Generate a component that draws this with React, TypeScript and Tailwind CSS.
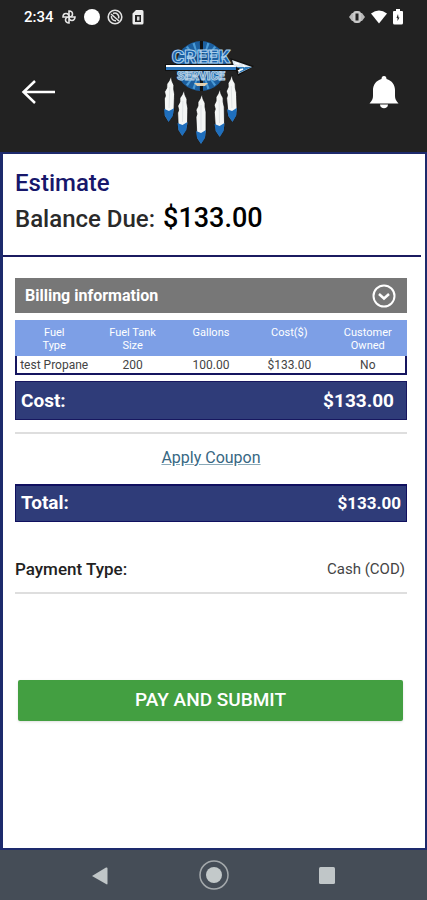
import React from "react";

const feathers = [
  { x: 20, y: 47, h: 41, tilt: 2 },
  { x: 33, y: 61, h: 41, tilt: 1 },
  { x: 51, y: 65, h: 45, tilt: 0 },
  { x: 69, y: 60, h: 43, tilt: -1 },
  { x: 81, y: 46, h: 42, tilt: -2 },
];

const rays = Array.from({ length: 20 }, (_, i) => (i * 360) / 20);

function Logo() {
  return (
    <svg
      className="h-[120px] w-[126px]"
      viewBox="0 0 126 120"
      role="img"
      aria-label="Creek Service"
    >
      <circle cx="51" cy="32" r="25" fill="#1c5f9f" />
      {rays.map((angle) => (
        <path
          key={angle}
          d="M51 32 L49.8 8 L52.2 8 Z"
          fill={angle % 90 === 0 ? "#111111" : "#4b9bd6"}
          transform={`rotate(${angle} 51 32)`}
        />
      ))}
      <path d="M50 7 H53 V20 H50 Z M50 46 H53 V57 H50 Z" fill="#111111" />
      <circle cx="51" cy="32" r="13" fill="#174d83" />
      <path d="M44 49 H58 L55 52 H47 Z" fill="#e3cfae" />
      <g
        fontFamily="Roboto, sans-serif"
        fontWeight="900"
        textAnchor="middle"
        strokeLinejoin="round"
      >
        <text x="51" y="29" fontSize="19" fill="#1762ac" stroke="#a9cdea" strokeWidth="1">
          CREEK
        </text>
        <text x="51" y="46" fontSize="12" fill="#3d7fb9" stroke="#b5cfe4" strokeWidth="1">
          SERVICE
        </text>
      </g>
      <path d="M15 30 L84 30 L80 24 L104 32 L88 42 L86 37 L15 37 Z" fill="#111111" />
      <path d="M16 32 H86" stroke="#ffffff" strokeWidth="2" />
      <path d="M16 34.500 H86" stroke="#2d77bd" strokeWidth="3" />
      <path d="M82 26 L102 33 L88 40 L90 34 L84 32 Z" fill="#dfe9f1" />
      <path d="M86 33 L102 33 L89 39 L91 35 Z" fill="#2f7cbc" />
      <path d="M85 29 l4 1 M88 37 l5 -2 M93 31 l2 2" stroke="#ffffff" strokeWidth="1.500" />
      {feathers.map((f) => (
        <g key={f.x} transform={`translate(${f.x} ${f.y}) rotate(${f.tilt})`}>
          <path
            d={`M1 -5 L2 0 L4 4 L4 8 L5 13 L5 17 L5 ${f.h - 13} L4 ${f.h - 7} L0 ${f.h} L-4 ${f.h - 6} L-5 18 L-4 15 L-5 11 L-3 7 L-3 3 L-1 0 Z`}
            fill="#f4f6f5"
            stroke="#0b0b0b"
            strokeWidth="0.700"
          />
          <path
            d={`M-5 ${f.h - 13} L0 ${f.h - 11} L5 ${f.h - 14} L4 ${f.h - 6} L0 ${f.h} L-4 ${f.h - 6} Z`}
            fill="#1f6fbd"
          />
          <path d={`M0 6 V${f.h - 14}`} stroke="#d0d5d8" strokeWidth="0.600" />
        </g>
      ))}
    </svg>
  );
}

function StatusBar() {
  return (
    <div className="flex h-[34px] items-center justify-between px-6 text-white">
      <div className="flex items-center gap-[7px]">
        <span className="text-[15px] leading-5 font-medium">2:34</span>
        <svg className="size-4" viewBox="0 0 16 16" fill="#222222" stroke="#e5e5e5" strokeWidth="1.600">
          <path d="M8 8 V2 a3.500 3 0 0 1 0 6 Z" />
          <path d="M8 8 H14 a3 3.500 0 0 1 -6 0 Z" />
          <path d="M8 8 V14 a3.500 3 0 0 1 0 -6 Z" />
          <path d="M8 8 H2 a3 3.500 0 0 1 6 0 Z" />
        </svg>
        <svg className="size-4" viewBox="0 0 16 16">
          <circle cx="8" cy="8" r="8" fill="#ffffff" />
        </svg>
        <svg className="size-4" viewBox="0 0 16 16" fill="none" stroke="#e2e2e2">
          <circle cx="8" cy="8" r="6.800" strokeWidth="1.600" />
          <path d="M4 5 L12 12" strokeWidth="1.600" />
          <path d="M6 4.500 a4 4 0 0 1 5.500 5 M4.500 7 a4 4 0 0 0 4.500 4.700" strokeWidth="1.500" />
        </svg>
        <svg className="size-4" viewBox="0 0 16 16">
          <path
            d="M6 1 H12 a1.500 1.500 0 0 1 1.500 1.500 V14 a1.500 1.500 0 0 1 -1.500 1.500 H4 A1.500 1.500 0 0 1 2.500 14 V4.500 Z"
            fill="#ececec"
          />
          <path d="M5 6 H11 V13 H5 Z" fill="#222222" />
          <path d="M7 7.500 H9.500 V11.500 H7 Z" fill="#d5d5d5" />
        </svg>
      </div>
      <div className="flex items-center gap-[6px]">
        <svg className="h-4 w-4" viewBox="0 0 16 16">
          <path d="M0 8 L3 4 H13 L16 8 L13 12 H3 Z" fill="#b9b9b9" />
          <rect x="4" y="2" width="8" height="12" rx="3" fill="#c9c9c9" />
          <rect x="6.500" y="4.500" width="3" height="7" fill="#222222" />
        </svg>
        <svg className="h-4 w-4" viewBox="0 0 16 16">
          <path d="M0 4.500 Q8 -1.500 16 4.500 L8 14.500 Z" fill="#ffffff" />
        </svg>
        <svg className="h-4 w-[10px]" viewBox="0 0 10 16">
          <path d="M3 0 H7 V2 H9 a1 1 0 0 1 1 1 V14 a1.500 1.500 0 0 1 -1.500 1.500 H1.500 A1.500 1.500 0 0 1 0 14 V3 a1 1 0 0 1 1 -1 H3 Z" fill="#ffffff" />
          <path d="M5 5 L3.500 9 H4.500 V12 L6.500 8.500 H5.500 Z" fill="#222222" />
        </svg>
      </div>
    </div>
  );
}

function Header() {
  return (
    <header className="flex h-[118px] items-start justify-between pr-[28px] pl-[21px]">
      <button type="button" aria-label="Back" className="mt-[44px]">
        <svg className="h-7 w-9" viewBox="0 0 36 28" fill="none" stroke="#ffffff" strokeWidth="2.500">
          <path d="M34 14 H2 M14 3 L2.500 14 L14 25" />
        </svg>
      </button>
      <Logo />
      <button type="button" aria-label="Notifications" className="mt-[41px]">
        <svg className="h-[34px] w-[30px]" viewBox="0 0 30 34" fill="#ffffff">
          <path d="M15 1 C17 1 17.500 2.500 17.500 4 C23 5.500 26 10 26 15 V21 C26 24 27 25.500 29.500 28.500 H0.500 C3 25.500 4 24 4 21 V15 C4 10 7 5.500 12.500 4 C12.500 2.500 13 1 15 1 Z" />
          <path d="M11 29.500 H19 C19 34.500 11 34.500 11 29.500 Z" />
        </svg>
      </button>
    </header>
  );
}

const columns = [["Fuel", "Type"], ["Fuel Tank", "Size"], ["Gallons"], ["Cost($)"], ["Customer", "Owned"]];
const row = ["test Propane", "200", "100.00", "$133.00", "No"];

function BillingTable() {
  return (
    <div className="mt-[7px] border-2 border-t-0 border-[#15155f]">
      <table className="-mx-[2px] w-[calc(100%+4px)] table-fixed border-collapse text-center text-[11px]">
        <thead className="bg-[#7d9fe6] text-white">
          <tr className="h-9 align-top">
            {columns.map((lines) => (
              <th key={lines[0]} scope="col" className="px-1 pt-[6px] pb-1 leading-[13px] font-normal">
                {lines.map((line) => (
                  <span key={line} className="block">
                    {line}
                  </span>
                ))}
              </th>
            ))}
          </tr>
        </thead>
        <tbody>
          <tr className="text-[12px] leading-[15px] text-[#444444]">
            {row.map((value) => (
              <td key={value} className="px-0 pt-[2px] pb-0 whitespace-nowrap">
                {value}
              </td>
            ))}
          </tr>
        </tbody>
      </table>
    </div>
  );
}

function NavBar() {
  return (
    <nav className="flex h-[50px] items-center justify-between bg-[#454d57] px-[84px]" aria-label="System">
      <button type="button" aria-label="Back">
        <svg className="size-8" viewBox="0 0 32 32">
          <path d="M8 17 L22 8.500 Q23.500 8 23.500 9.500 V24.500 Q23.500 26 22 25 Z" fill="#c0c6c8" />
        </svg>
      </button>
      <button type="button" aria-label="Home">
        <svg className="size-8" viewBox="0 0 32 32">
          <circle cx="16" cy="16" r="14" fill="none" stroke="#a4a9ac" strokeWidth="1.500" />
          <circle cx="16" cy="16" r="8" fill="#c3c9ca" />
        </svg>
      </button>
      <button type="button" aria-label="Recent apps">
        <svg className="size-8" viewBox="0 0 32 32">
          <rect x="8" y="8" width="16" height="17" rx="1.500" fill="#c0c6c8" />
        </svg>
      </button>
    </nav>
  );
}

export default function App() {
  return (
    <div className="flex min-h-screen flex-col bg-[#222222] font-['Roboto','Liberation_Sans',sans-serif]">
      <StatusBar />
      <Header />
      <main className="flex grow flex-col border-2 border-l-[3px] border-[#1d2a6c] bg-white">
        <section className="mr-1 border-b-2 border-[#1b1b60] pt-[14px] pb-[18px] pl-3 font-medium">
          <h1 className="text-[24px] leading-[30px] text-[#17176b]">Estimate</h1>
          <p className="mt-[2px] flex items-baseline gap-2 text-[24px] leading-9 text-[#2a2a2a]">
            Balance Due:
            <strong className="text-[27px] font-medium text-black">$133.00</strong>
          </p>
        </section>

        <section className="mt-[21px] mr-[18px] ml-3">
          <button
            type="button"
            className="flex h-[35px] w-full items-center justify-between bg-[#777777] px-[10px] text-[16px] font-bold text-white"
          >
            Billing information
            <svg className="size-[26px]" viewBox="0 0 26 26" fill="none" stroke="#ffffff" strokeWidth="2">
              <circle cx="13" cy="13" r="10.500" />
              <path d="M8 11 L13 15.500 L18 11" strokeWidth="2.500" />
            </svg>
          </button>
          <BillingTable />
          <div className="mt-[6px] flex h-[39px] items-center justify-between border border-[#17175f] bg-[#2f3c79] pt-[2px] pr-[12px] pl-[5px] text-[19px] font-bold text-white">
            <span>Cost:</span>
            <span>$133.00</span>
          </div>
          <div className="mt-[12px] border-t-2 border-[#dedede] pt-[11px] pb-[13px] text-center">
            <a href="#coupon" className="text-[16px] leading-[26px] text-[#376783] underline decoration-[#8aa9b8]">
              Apply Coupon
            </a>
          </div>
          <div className="flex h-[38px] items-center justify-between border border-t-2 border-[#10105f] bg-[#2f3c79] px-[5px] font-bold text-white">
            <span className="text-[19px]">Total:</span>
            <span className="text-[17px]">$133.00</span>
          </div>
          <div className="mt-[34px] flex h-[38px] justify-between border-b-2 border-[#dedede] pr-[2px] leading-[26px]">
            <span className="text-[17px] font-medium text-[#222222]">Payment Type:</span>
            <span className="text-[15px] text-[#444444]">Cash (COD)</span>
          </div>
        </section>

        <button
          type="button"
          className="mt-[86px] mr-[22px] ml-[15px] h-[41px] rounded-[2px] bg-[#439f41] text-[19px] font-medium text-white shadow-sm"
        >
          PAY AND SUBMIT
        </button>
      </main>
      <NavBar />
    </div>
  );
}
